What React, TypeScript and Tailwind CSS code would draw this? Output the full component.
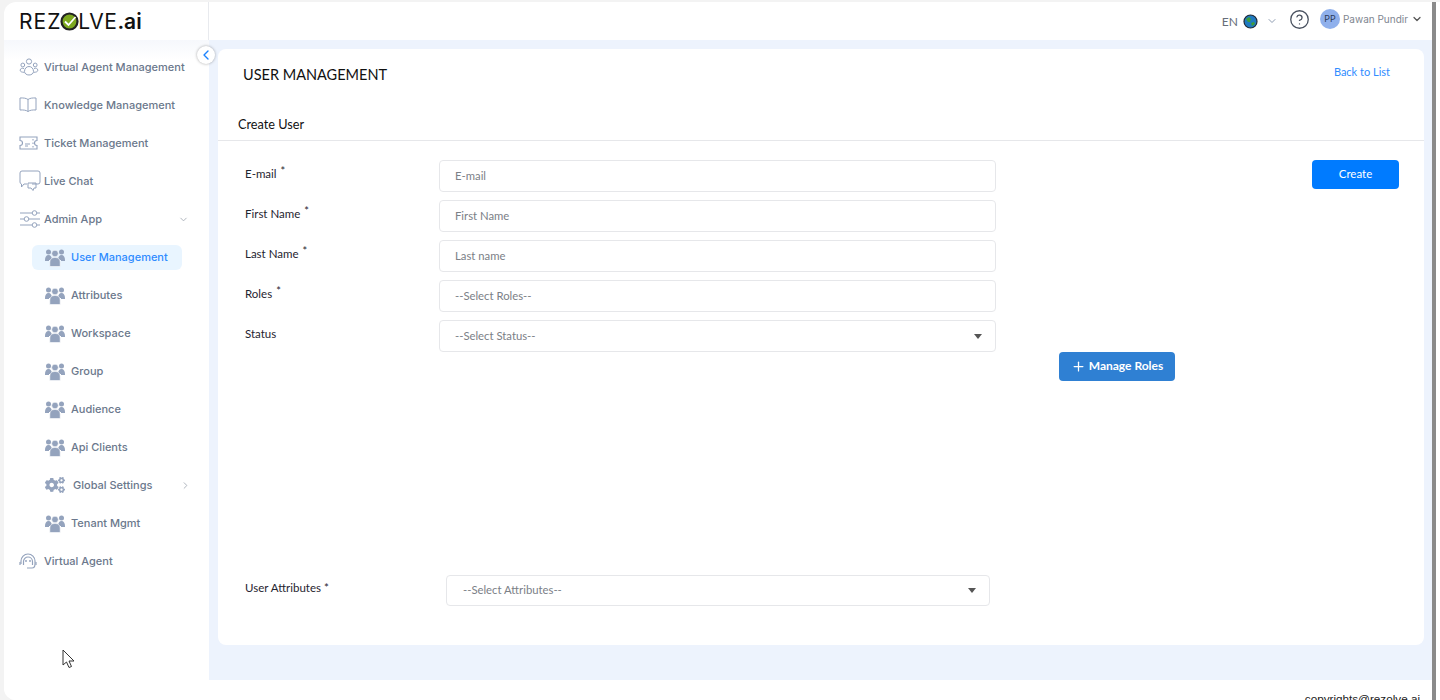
import { ChevronDown, ChevronLeft, ChevronRight, CircleHelp, Plus } from "lucide-react";
import { FaCogs } from "react-icons/fa";

const subItems = ["User Management", "Attributes", "Workspace", "Group", "Audience", "Api Clients"];

function UsersIcon() {
  return (
    <svg width="20" height="19" viewBox="0 0 20 19" fill="#94a3bd" className="mr-[6px] shrink-0">
      <circle cx="3.500" cy="4" r="2.500" />
      <circle cx="16.500" cy="4" r="2.500" />
      <path d="M0 12c0-3 1.300-5 3.500-5S7 9 7 12H4v1H0zM13 12c0-3 1.300-5 3.500-5S20 9 20 12v1h-4v-1z" />
      <circle cx="10" cy="5.500" r="3.300" stroke="#fff" strokeWidth=".6" />
      <path d="M4.800 18.500V14a4.500 4.500 0 0 1 4.500-4.500h1.400a4.500 4.500 0 0 1 4.500 4.500v4.500z" stroke="#fff" strokeWidth=".6" />
    </svg>
  );
}

function PeopleIcon() {
  return (
    <svg width="20" height="20" viewBox="0 0 20 20" fill="none" stroke="#94a3bd" strokeWidth="1">
      <circle cx="10" cy="4.500" r="2.600" />
      <circle cx="3.800" cy="8" r="1.900" />
      <circle cx="16.200" cy="8" r="1.900" />
      <path d="M5.500 14.500c0-3 2-5 4.500-5s4.500 2 4.500 5c0 2-2 3.500-4.500 3.500s-4.500-1.500-4.500-3.500z" />
      <path d="M5 11.500c-2-.6-3.800-.2-3.800 1.800 0 1.300 1.500 2 4 2M15 11.500c2-.6 3.800-.2 3.800 1.800 0 1.300-1.500 2-4 2" />
    </svg>
  );
}

function BookIcon() {
  return (
    <svg width="18" height="16" viewBox="0 0 18 16" fill="none" stroke="#94a3bd" strokeWidth="1">
      <path d="M9 2.500C7 1 4 .8 1 1v12c3-.2 6 0 8 1.500 2-1.500 5-1.700 8-1.500V1c-3-.2-6 0-8 1.500zM9 2.500v12" />
    </svg>
  );
}

function TicketIcon() {
  return (
    <svg width="19" height="14" viewBox="0 0 19 14" fill="none" stroke="#94a3bd" strokeWidth="1.100">
      <path d="M1 1h17v3.500a2.500 2.500 0 0 0 0 5V13H1V9.500a2.500 2.500 0 0 0 0-5z" />
      <path d="M6 8h5M6 10h3M14 3v1.500M14 6.500V8M14 10v1.500" />
    </svg>
  );
}

function ChatIcon() {
  return (
    <svg width="22" height="22" viewBox="0 0 22 22" fill="none" stroke="#94a3bd" strokeWidth="1">
      <path d="M3 1h16a2 2 0 0 1 2 2v9a2 2 0 0 1-2 2h-6M8 14H5l-2.500 3V14A2 2 0 0 1 1 12V3a2 2 0 0 1 2-2" />
      <path d="M9 13h8v5h-2l-1 2.500-2-2.500H9z" />
    </svg>
  );
}

function SlidersIcon() {
  return (
    <svg width="22" height="18" viewBox="0 0 22 18" fill="none" stroke="#94a3bd" strokeWidth="1">
      <path d="M1 3h12M18 3h3M1 9h4M10 9h11M1 15h12M18 15h3" />
      <circle cx="15.500" cy="3" r="2.300" />
      <circle cx="7.500" cy="9" r="2.300" />
      <circle cx="15.500" cy="15" r="2.300" />
    </svg>
  );
}

function HeadsetIcon() {
  return (
    <svg width="18" height="17" viewBox="0 0 18 17" fill="none" stroke="#94a3bd" strokeWidth="1.200">
      <path d="M2 11V8a7 7 0 0 1 14 0v3c0 3-1 4-3 4H8" />
      <path d="M4.500 12V8.500A4.500 4.500 0 0 1 9 4a4.500 4.500 0 0 1 4.500 4.500V12" />
      <path d="M1 9v3M17 9v3" />
      <circle cx="7" cy="8" r=".4" />
      <circle cx="11" cy="8" r=".4" />
    </svg>
  );
}

function MainItem({ icon, label, right }: { icon: React.ReactNode; label: string; right?: React.ReactNode }) {
  return (
    <div className="h-[38px] flex items-center pl-[15px] pr-[20px] text-[11px] font-medium text-[#6b788c]">
      <span className="w-[25px] flex items-center justify-start shrink-0">{icon}</span>
      <span className="flex-1 whitespace-nowrap">{label}</span>
      {right}
    </div>
  );
}

function SubItem({ label, active }: { label: string; active?: boolean }) {
  return (
    <div className="h-[38px] flex items-center pl-[28px]">
      <div className={`w-[150px] h-[25px] rounded-md flex items-center pl-[13px] text-[11px] font-medium ${active ? "bg-[#e9f5ff] text-[#2f8cff]" : "text-[#6b788c]"}`}>
        <UsersIcon />
        {label}
      </div>
    </div>
  );
}

function Field({ label, star, placeholder, select }: { label: string; star?: boolean; placeholder: string; select?: boolean }) {
  return (
    <div className="flex items-start">
      <div className="w-[195px] pl-[1px] pt-[5px] text-[11.500px] text-[#1f2430]">
        {label}
        {star && <span className="ml-[4px] text-[11px] relative -top-[3px]">*</span>}
      </div>
      <div className="w-[557px] h-[32px] border border-[#e6e7ea] rounded flex items-center justify-between pl-[15px] pr-[13px] text-[11.300px] text-[#7b8087]">
        {placeholder}
        {select && <span className="w-0 h-0 border-x-[4px] border-x-transparent border-t-[5px] border-t-[#555]" />}
      </div>
    </div>
  );
}

export default function App() {
  return (
    <div className="h-[700px] w-full overflow-hidden flex bg-[#f3f3f3] pt-[2px] pl-[4px]">
      <div className="w-[1428px] h-[698px] bg-white rounded-l-xl overflow-hidden flex flex-col relative font-['Lato',sans-serif]">
        {/* top bar */}
        <div className="h-[38px] flex shrink-0">
          <div className="w-[205px] border-r border-[#e8eaee] flex items-center pl-[15px] text-[21px] font-['Inter',sans-serif] text-[#111] leading-none">
            <span className="tracking-[1px]">REZ</span>
            <svg width="19" height="19" viewBox="0 0 19 19" className="-mx-[1px]">
              <circle cx="9.500" cy="9.500" r="8" fill="#7da81f" stroke="#222" strokeWidth="2.200" />
              <path d="M5 9.500l3.500 3.500 7-8" fill="none" stroke="#fff" strokeWidth="1.800" />
            </svg>
            <span className="tracking-[0.5px]">LVE</span>
            <span className="font-semibold">.ai</span>
          </div>
          <div className="flex-1 flex items-center justify-end pr-[9px] text-[#666e7a]">
            <span className="text-[12px] mr-[5px] pt-[2px]">EN</span>
            <svg width="15" height="15" viewBox="0 0 15 15" className="mr-[8px] mt-[1px]">
              <circle cx="7.500" cy="7.500" r="6.500" fill="#1f7ac0" stroke="#1e2a38" strokeWidth="1.200" />
              <path d="M3 5l3-2 2 2-1 3-2 0zM8 9l3-1 1 2-3 2z" fill="#3f9d3a" />
            </svg>
            <ChevronDown size={12} className="text-[#8d9bb0] mr-[11px]" />
            <CircleHelp size={21} strokeWidth={1.500} className="text-[#4a5260] mr-[10px] -mt-[4px]" />
            <div className="w-[20px] h-[20px] rounded-full bg-[#8fb0ec] text-[#2c3a58] text-[9px] font-['Inter',sans-serif] flex items-center justify-center mr-[3px] -mt-[4px]">PP</div>
            <span className="text-[10px] font-['Inter',sans-serif] text-[#808690] -mt-[4px]">Pawan Pundir</span>
            <ChevronDown size={12} strokeWidth={2.500} className="ml-[3px] -mt-[4px] text-[#555]" />
          </div>
        </div>

        <div className="flex-1 flex min-h-0">
          {/* sidebar */}
          <div className="w-[205px] shrink-0 pt-[8px] bg-gradient-to-b from-[#f6f8fc] to-white to-[20px] font-['Inter',sans-serif]">
            <MainItem icon={<PeopleIcon />} label="Virtual Agent Management" />
            <MainItem icon={<BookIcon />} label="Knowledge Management" />
            <MainItem icon={<TicketIcon />} label="Ticket Management" />
            <MainItem icon={<ChatIcon />} label="Live Chat" />
            <MainItem icon={<SlidersIcon />} label="Admin App" right={<ChevronDown size={11} className="text-[#a9afb8]" />} />
            {subItems.map((s, i) => (
              <SubItem key={s} label={s} active={i === 0} />
            ))}
            <div className="h-[38px] flex items-center pl-[41px] pr-[18px] text-[11px] font-medium text-[#6b788c]">
              <FaCogs className="text-[#94a3bd] text-[20px] mr-[8px] shrink-0" />
              <span className="flex-1">Global Settings</span>
              <ChevronRight size={11} className="text-[#a9afb8]" />
            </div>
            <SubItem label="Tenant Mgmt" />
            <MainItem icon={<HeadsetIcon />} label="Virtual Agent" />
          </div>

          {/* main */}
          <div className="flex-1 flex flex-col min-w-0">
            <div className="h-[640px] shrink-0 bg-[#edf3fd] pt-[9px] pl-[9px] pr-[8px]">
              <div className="h-[596px] bg-white rounded-lg">
                <div className="h-[50px] flex items-start justify-between pl-[25px] pr-[34px]">
                  <span className="text-[14.500px] text-[#111] leading-[52px]">USER MANAGEMENT</span>
                  <span className="text-[11px] text-[#2f8cff] leading-[46px]">Back to List</span>
                </div>
                <div className="h-[42px] border-b border-[#e6e7ea] pl-[20px] flex items-center pt-[10px] text-[12.700px] text-[#111]">Create User</div>
                <div className="flex pt-[19px] pl-[26px] pr-[25px] justify-between items-start">
                  <div className="flex flex-col gap-[8px]">
                    <Field label="E-mail" star placeholder="E-mail" />
                    <Field label="First Name" star placeholder="First Name" />
                    <Field label="Last Name" star placeholder="Last name" />
                    <Field label="Roles" star placeholder="--Select Roles--" />
                    <Field label="Status" placeholder="--Select Status--" select />
                  </div>
                  <button className="w-[87px] h-[29px] rounded bg-[#007bff] text-white text-[11.500px] pb-[2px]">Create</button>
                </div>
                <div className="pl-[841px]">
                  <button className="w-[116px] h-[29px] rounded bg-[#2f80d3] text-white text-[12px] font-bold flex items-center justify-center gap-[3px] pb-[1px]">
                    <Plus size={15} />
                    Manage Roles
                  </button>
                </div>
                <div className="flex items-start pl-[26px] pt-[194px]">
                  <div className="w-[202px] pl-[1px] pt-[4px] text-[11.500px] text-[#1f2430]">User Attributes *</div>
                  <div className="w-[544px] h-[31px] border border-[#e6e7ea] rounded flex items-center justify-between pl-[16px] pr-[13px] text-[11.300px] text-[#7b8087]">
                    --Select Attributes--
                    <span className="w-0 h-0 border-x-[4px] border-x-transparent border-t-[5px] border-t-[#555]" />
                  </div>
                </div>
              </div>
            </div>
            <div className="flex-1 flex justify-end pr-[12px] pt-[13px] text-[11.700px] text-[#222] font-['Liberation_Sans',sans-serif] leading-none">copyrights@rezolve.ai</div>
          </div>
        </div>

        {/* collapse toggle */}
        <div className="absolute left-[193px] top-[44px] w-[18px] h-[18px] rounded-full bg-white shadow-[0_0_3px_rgba(0,0,0,0.35)] flex items-center justify-center">
          <ChevronLeft size={16} strokeWidth={2} className="text-[#1a82ff]" />
        </div>

        {/* mouse cursor */}
        <svg width="14" height="20" viewBox="0 0 14 20" className="absolute left-[58px] top-[647px]">
          <path d="M1 1v15l3.500-3 2.500 5.500 2.500-1-2.500-5.500h5z" fill="#fff" stroke="#333" strokeWidth="1" />
        </svg>
      </div>
      <div className="w-[4px] h-full bg-[#8a8a8a] shrink-0" />
      <div className="flex-1 bg-white" />
    </div>
  );
}
